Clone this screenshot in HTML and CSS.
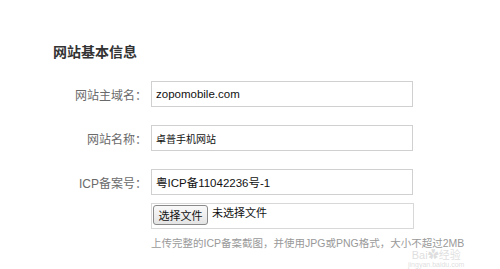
FILE: index.html
```html
<!DOCTYPE html>
<html lang="zh-CN">
<head>
    <meta charset="UTF-8">
    <title>网站基本信息</title>
    <link rel="stylesheet" href="styles.css">
</head>
<body>
    <div class="panel">
        <h2 class="title">网站基本信息</h2>
        <div class="form">
            <div class="row">
                <label>网站主域名：</label>
                <input class="field" type="text" value="zopomobile.com">
            </div>
            <div class="row">
                <label>网站名称：</label>
                <input class="field field-cn" type="text" value="卓普手机网站">
            </div>
            <div class="row">
                <label>ICP备案号：</label>
                <input class="field" type="text" value="粤ICP备11042236号-1">
            </div>
            <div class="row row-file">
                <label></label>
                <div class="file-box">
                    <button class="file-btn">选择文件</button>
                    <span class="file-name">未选择文件</span>
                </div>
            </div>
            <div class="row row-hint">
                <label></label>
                <p class="hint">上传完整的ICP备案截图，并使用JPG或PNG格式，大小不超过2MB</p>
            </div>
        </div>
    </div>

    <!-- watermark -->
    <div class="watermark">
        <span class="wm-big">Bai<span class="wm-paw">&#10047;</span>经验</span>
        <span class="wm-small">jingyan.baidu.com</span>
    </div>
</body>
</html>
```

FILE: styles.css
```css
body {
    margin: 0;
    background: #fff;
    font-family: "Liberation Sans", "Noto Sans CJK SC", sans-serif;
    color: #222;
    position: relative;
    height: 269px;
    overflow: hidden;
}
.panel {
    padding: 42px 0 0 53px;
}
.title {
    margin: 0 0 19px 0;
    font-size: 14px;
    line-height: 20px;
    font-weight: bold;
    color: #333;
}
.row {
    display: grid;
    grid-template-columns: 94px 263px;
    column-gap: 4px;
    align-items: center;
    margin-bottom: 18px;
}
.row label {
    text-align: right;
    font-size: 12px;
    color: #6a6a6a;
}
.field {
    box-sizing: border-box;
    height: 26px;
    width: 262px;
    margin: 0;
    padding: 0 4px;
    border: 1px solid #d0d0d0;
    font-family: "Liberation Sans", "Noto Sans CJK SC", sans-serif;
    font-size: 11.5px;
    color: #111;
    outline: none;
}
.field-cn {
    font-size: 10px;
}
.row-file {
    margin-top: -10px;
    margin-bottom: 0;
}
.file-box {
    box-sizing: border-box;
    height: 26px;
    width: 263px;
    border: 1px solid #d8d8d8;
    display: flex;
    align-items: flex-start;
    padding: 1px 0 0 1px;
    gap: 4px;
}
.file-btn {
    height: 20px;
    width: 55px;
    padding: 0;
    font-family: "Noto Sans CJK SC", sans-serif;
    font-size: 11px;
    color: #111;
    border: 1px solid #8a8a8a;
    border-radius: 3px;
    background: linear-gradient(to bottom, #fafafa, #e4e4e4);
}
.file-name {
    font-size: 11px;
    line-height: 16px;
    color: #111;
}
.row-hint {
    margin-top: 6px;
}
.hint {
    margin: 0;
    font-size: 10.5px;
    line-height: 16px;
    color: #999;
    white-space: nowrap;
}

/* watermark */
.watermark {
    position: absolute;
    left: 408px;
    top: 249px;
    display: flex;
    flex-direction: column;
    align-items: center;
    color: rgba(190, 190, 190, 0.5);
    font-family: "Liberation Sans", "Noto Sans CJK SC", sans-serif;
}
.wm-big {
    font-size: 11px;
    line-height: 12px;
}
.wm-paw {
    font-size: 11px;
}
.wm-small {
    font-size: 7px;
    line-height: 8px;
}
```
